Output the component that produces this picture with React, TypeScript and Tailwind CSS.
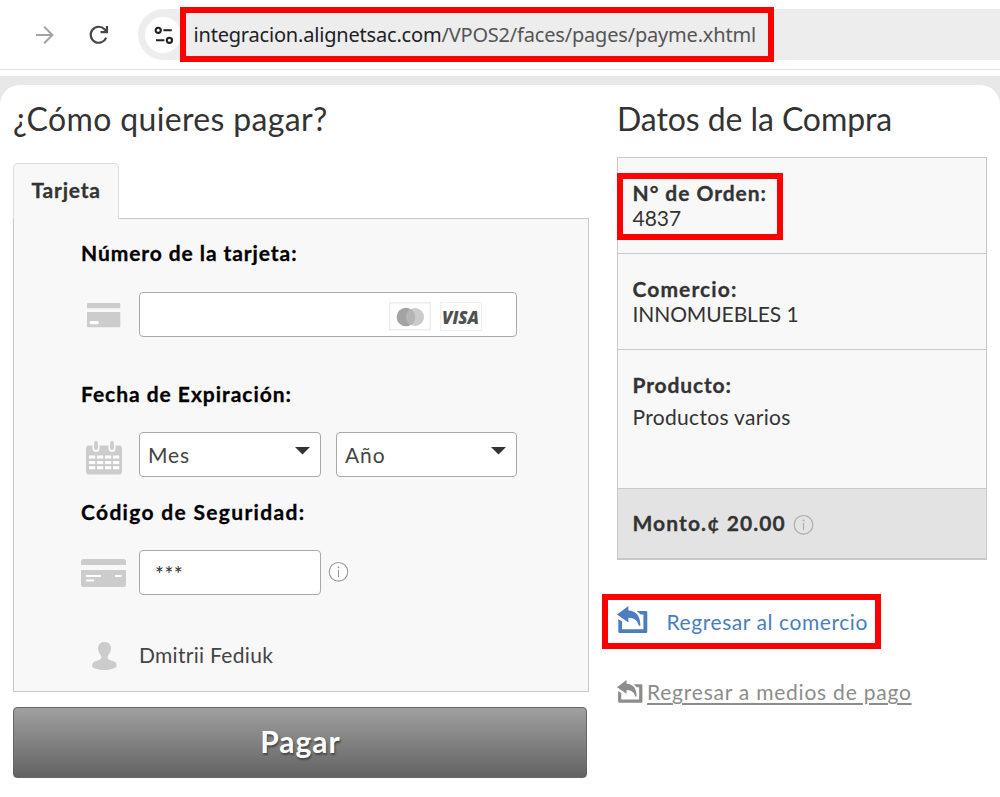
import type { ReactNode } from "react";

const lato = "font-['Lato','Liberation_Sans',sans-serif]";

function ForwardIcon() {
  return (
    <svg width="20" height="20" viewBox="0 0 20 20" fill="none" stroke="#a3a3a3" strokeWidth="2">
      <path d="M1 10H17M9.2 1.8L17.4 10L9.2 18.2" />
    </svg>
  );
}

function ReloadIcon() {
  return (
    <svg width="20" height="20" viewBox="0 0 20 20" fill="none" stroke="#474747" strokeWidth="2.2">
      <path d="M17.2 12.6A8 8 0 1 1 15.6 4.3L17.6 6.4" />
      <path d="M18 1V7.2H11.6" />
    </svg>
  );
}

function TuneIcon() {
  return (
    <svg width="20" height="18" viewBox="0 0 20 18" fill="none" stroke="#202124" strokeWidth="2.1">
      <circle cx="5.2" cy="4.3" r="2.6" />
      <path d="M10.4 4.3H18.8M3 14.3H11.4" />
      <circle cx="16.4" cy="14.3" r="2.6" />
    </svg>
  );
}

function CardIcon() {
  return (
    <svg width="34" height="25" viewBox="0 0 34 25" fill="#ccc">
      <path d="M1 0H32Q33.3 0 33.3 1V5.3H0V1Q0 0 1 0Z" />
      <path d="M0 9H33.3V23.2Q33.3 24.2 32.3 24.2H1Q0 24.2 0 23.2Z" />
      <rect x="2.7" y="18" width="9" height="3.2" rx="1" fill="#fff" />
    </svg>
  );
}

function CalendarIcon() {
  const cols = [3, 11, 19, 27];
  const rows = [14.5, 20, 25.2];
  return (
    <svg width="36" height="34" viewBox="0 0 36 34">
      <rect x="0" y="4.5" width="36" height="29" rx="3" fill="#ccc" />
      <path d="M10 1.5V7.5M26 1.5V7.5" stroke="#f8f8f8" strokeWidth="7" strokeLinecap="round" />
      <path d="M10 2V7M26 2V7" stroke="#ccc" strokeWidth="4" strokeLinecap="round" />
      {rows.map((y) => cols.map((x) => <rect key={`${x}-${y}`} x={x} y={y} width="6.2" height="3.1" fill="#fff" />))}
    </svg>
  );
}

function CodeCardIcon() {
  return (
    <svg width="45" height="28" viewBox="0 0 45 28" fill="#ccc">
      <path d="M2.5 0H42.5Q45 0 45 2.5V6H0V2.5Q0 0 2.5 0Z" />
      <path d="M0 11H45V25.5Q45 28 42.5 28H2.5Q0 28 0 25.5Z" />
      <path d="M5 17H20M5 21.5H13M34 17H40.5" stroke="#fff" strokeWidth="2" />
    </svg>
  );
}

function PersonIcon() {
  return (
    <svg width="26" height="28" viewBox="0 0 26 28" fill="#ccc">
      <path d="M12.5 0C16.6 0 19 2.7 19 6.5C19 10.6 16 12.8 15.6 14.8C15.2 17.2 17.4 18 20 18.7C23.4 19.6 24.6 21 24.6 23.8C24.6 26.4 18 28 12.3 28S0 26.4 0 23.8C0 21 1.6 19.6 5 18.7C7.6 18 9.8 17.2 9.4 14.8C9 12.8 6 10.6 6 6.5C6 2.7 8.4 0 12.5 0Z" />
    </svg>
  );
}

function InfoIcon({ color, fill }: { color: string; fill: string }) {
  return (
    <svg width="21" height="21" viewBox="0 0 21 21">
      <rect width="21" height="21" fill={fill} />
      <circle cx="10.5" cy="10.8" r="9.3" fill="none" stroke={color} strokeWidth="1.1" />
      <path d="M10.5 9V16" stroke={color} strokeWidth="1.1" />
      <circle cx="10.5" cy="6.4" r="0.9" fill={color} />
    </svg>
  );
}

function ReturnIcon({ size, color }: { size: number; color: string }) {
  return (
    <svg width={size} height={(size * 27) / 31} viewBox="0 0 31 27" fill={color}>
      <path d="M0 8.6L11.4 0V4.6C19.5 4.9 23.4 10.5 23.4 19.8H21.8C20.6 14.4 17.4 12 11.4 11.8V16.4Z" />
      <path d="M19.6 5H29Q30.3 5 30.3 6.3V25.7Q30.3 27 29 27H2.6Q1.3 27 1.3 25.7V13L5 15.4V23.2H26.4V8.6H23.6Q22.2 6.6 19.6 5Z" />
    </svg>
  );
}

function MastercardBadge() {
  return (
    <svg width="42" height="29" viewBox="0 0 42 29">
      <rect x="0.75" y="0.75" width="40.5" height="27" fill="#fff" stroke="#eee" strokeWidth="1.5" />
      <circle cx="26" cy="15" r="9" fill="#cbcbcb" />
      <circle cx="16.8" cy="15" r="9.2" fill="#a3a3a3" />
      <path d="M21.4 7.1A9.2 9.2 0 0 1 21.4 22.9A9.2 9.2 0 0 1 21.4 7.1Z" fill="#b5b5b5" />
    </svg>
  );
}

function VisaBadge() {
  return (
    <span className="flex h-[29px] w-[42px] items-center justify-center border-[1.5px] border-[#eee] bg-white pt-0.5 font-['Open_Sans',sans-serif] text-[17px] leading-none font-extrabold tracking-[-0.1px] text-[#505050] italic">
      VISA
    </span>
  );
}

function Select({ label, width }: { label: string; width: string }) {
  return (
    <div className={`flex h-[45px] ${width} justify-between rounded-[4px] border border-[#a9a9a9] bg-white pr-[10.5px] pl-[8px]`}>
      <span className="leading-[43px] tracking-[0.9px] text-[#444]">{label}</span>
      <svg className="mt-[14px]" width="15" height="8" viewBox="0 0 15 8" fill="#333">
        <path d="M0 0H15L7.5 7.6Z" />
      </svg>
    </div>
  );
}

function Row({ children, className }: { children: ReactNode; className: string }) {
  return <div className={`flex flex-col border-b border-[#c8c8c8] px-[14.5px] leading-[25px] ${className}`}>{children}</div>;
}

export default function App() {
  return (
    <div className={`relative h-[797px] w-[1000px] overflow-hidden bg-white text-[21px] whitespace-nowrap text-[#333] ${lato}`}>
      <header className="flex h-[70px] border-b border-[#dfdfdf]">
        <div className="flex w-[138px] gap-[34px] pt-[25px] pl-[35px]">
          <ForwardIcon />
          <ReloadIcon />
        </div>
        <div className="mt-[9px] flex h-[51px] flex-1 items-center rounded-l-full bg-[#ededed] pl-[7px]">
          <div className="flex size-9 items-center justify-center rounded-full bg-white">
            <TuneIcon />
          </div>
          <span className="ml-[12.5px] font-['Noto_Sans',sans-serif] text-[20px] tracking-[-0.19px] text-[#555]">
            <span className="text-[#202124]">integracion.alignetsac.com</span>/VPOS2/faces/pages/payme.xhtml
          </span>
        </div>
      </header>

      <div className="mt-[6px] bg-[#e8e8e8] pt-[9px]">
        <main className="flex h-[712px] rounded-t-[20px] bg-white pl-[13px]">
          <section className="w-[604px] pt-[14px]">
            <h1 className="h-10 text-[32px] leading-10 tracking-[0.35px]">¿Cómo quieres pagar?</h1>
            <div className="relative z-10 mt-[24px] h-[56px] w-[106px] rounded-t-[5px] border border-b-0 border-[#dcdcdc] bg-[#f8f8f8] pl-[17.5px] leading-[52px] font-bold tracking-[0.8px] [-webkit-text-stroke:0.3px]">
              Tarjeta
            </div>
            <div className="-mt-px h-[474px] w-[576px] border border-[#c8c8c8] bg-[#f8f8f8] pl-[67px] text-black">
              <p className="mt-[21px] h-[26px] leading-[26px] font-bold tracking-[0.92px] [-webkit-text-stroke:0.3px]">Número de la tarjeta:</p>
              <div className="mt-[26px] flex h-[45px]">
                <div className="w-[58px] pt-[11px] pl-[6px]">
                  <CardIcon />
                </div>
                <div className="flex w-[378px] items-center justify-end gap-[9px] rounded-[4px] border border-[#a9a9a9] bg-white pt-[3px] pr-[34.5px]">
                  <MastercardBadge />
                  <VisaBadge />
                </div>
              </div>
              <p className="mt-[44px] h-[26px] leading-[26px] font-bold tracking-[0.97px] [-webkit-text-stroke:0.3px]">Fecha de Expiración:</p>
              <div className="mt-[25px] flex h-[45px]">
                <div className="w-[58px] pt-[9px] pl-[5px]">
                  <CalendarIcon />
                </div>
                <Select label="Mes" width="w-[182px]" />
                <div className="w-[15px]" />
                <Select label="Año" width="w-[181px]" />
              </div>
              <p className="mt-[22px] h-[26px] leading-[26px] font-bold tracking-[1.32px] [-webkit-text-stroke:0.3px]">Código de Seguridad:</p>
              <div className="mt-[25px] flex h-[45px]">
                <div className="w-[58px] pt-[9px]">
                  <CodeCardIcon />
                </div>
                <div className="w-[182px] rounded-[4px] border border-[#a9a9a9] bg-white pl-[15px] leading-[45px] tracking-[0.5px] text-[#333]">***</div>
                <div className="pt-[11px] pl-[7px]">
                  <InfoIcon color="#999" fill="#fff" />
                </div>
              </div>
              <div className="mt-[47px] flex h-[26px] leading-[26px] text-[#444]">
                <div className="w-[58px] pl-[11px]">
                  <PersonIcon />
                </div>
                <span className="tracking-[0.3px]">Dmitrii Fediuk</span>
              </div>
            </div>
            <button className="mt-[15px] flex h-[71px] w-[574px] items-center justify-center rounded-[4px] border border-[#666] bg-linear-to-b from-[#a0a0a0] to-[#636363] pb-[2px] pl-px text-[30px] font-bold tracking-[1px] text-white [text-shadow:1px_2px_2px_#444]">
              Pagar
            </button>
          </section>

          <aside className="w-[370px] pt-[14px]">
            <h1 className="h-10 text-[32px] leading-10 tracking-[-0.08px]">Datos de la Compra</h1>
            <div className="mt-[18px] border border-[#c8c8c8] bg-[#f8f8f8]">
              <Row className="h-[96px] pt-[22px]">
                <b className="tracking-[0.95px] [-webkit-text-stroke:0.3px]">N° de Orden:</b>
                <span>4837</span>
              </Row>
              <Row className="h-[96px] pt-[22px]">
                <b className="tracking-[1.1px] [-webkit-text-stroke:0.3px]">Comercio:</b>
                <span className="tracking-[-0.1px]">INNOMUEBLES 1</span>
              </Row>
              <Row className="h-[139px] gap-[7px] pt-[22px]">
                <b className="tracking-[0.85px] [-webkit-text-stroke:0.3px]">Producto:</b>
                <span className="tracking-[0.32px]">Productos varios</span>
              </Row>
              <Row className="h-[70px] bg-[#e3e3e3] pt-[21px]">
                <div className="flex">
                  <b className="w-[160px] tracking-[1.1px] [-webkit-text-stroke:0.3px]">Monto.¢ 20.00</b>
                  <span className="pt-[4px]">
                    <InfoIcon color="#aaa" fill="none" />
                  </span>
                </div>
              </Row>
            </div>
            <a className="mt-[46px] flex h-[29px] text-[#4a7ebf]">
              <span className="w-[49.5px]">
                <ReturnIcon size={31} color="#4a7ebf" />
              </span>
              <span className="leading-[31px] tracking-[0.57px]">Regresar al comercio</span>
            </a>
            <a className="mt-[45px] flex h-[26px] text-[#8c8c8c]">
              <span className="w-[30px]">
                <ReturnIcon size={26} color="#8c8c8c" />
              </span>
              <span className="leading-[24px] tracking-[0.77px] underline decoration-[1.5px] underline-offset-[3px] [text-decoration-skip-ink:auto]">
                Regresar a medios de pago
              </span>
            </a>
          </aside>
        </main>
      </div>

      <div className="absolute top-[7px] left-[180px] z-20 h-[55px] w-[594px] border-6 border-[#f00]" />
      <div className="absolute top-[173px] left-[617px] z-20 h-[67px] w-[166px] border-6 border-[#f00]" />
      <div className="absolute top-[594px] left-[602px] z-20 h-[55px] w-[279px] border-6 border-[#f00]" />
    </div>
  );
}
